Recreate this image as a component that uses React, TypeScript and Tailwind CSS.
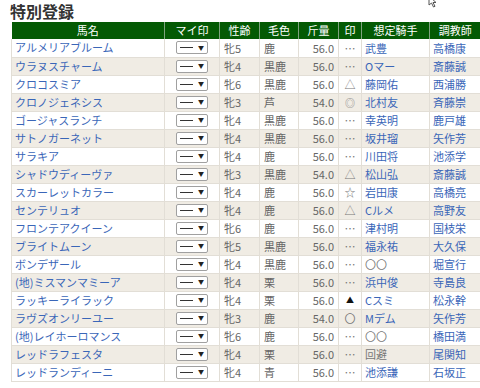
import React from "react";

interface Entry {
  name: string;
  sex: string;
  coat: string;
  weight: string;
  mark: string;
  jockey: string;
  trainer: string;
}

const entries: Entry[] = [
  { name: "アルメリアブルーム", sex: "牝5", coat: "鹿", weight: "56.0", mark: "…", jockey: "武豊", trainer: "高橋康" },
  { name: "ウラヌスチャーム", sex: "牝4", coat: "黒鹿", weight: "56.0", mark: "…", jockey: "Oマー", trainer: "斎藤誠" },
  { name: "クロコスミア", sex: "牝6", coat: "黒鹿", weight: "56.0", mark: "△", jockey: "藤岡佑", trainer: "西浦勝" },
  { name: "クロノジェネシス", sex: "牝3", coat: "芦", weight: "54.0", mark: "◎", jockey: "北村友", trainer: "斉藤崇" },
  { name: "ゴージャスランチ", sex: "牝4", coat: "黒鹿", weight: "56.0", mark: "…", jockey: "幸英明", trainer: "鹿戸雄" },
  { name: "サトノガーネット", sex: "牝4", coat: "黒鹿", weight: "56.0", mark: "…", jockey: "坂井瑠", trainer: "矢作芳" },
  { name: "サラキア", sex: "牝4", coat: "鹿", weight: "56.0", mark: "…", jockey: "川田将", trainer: "池添学" },
  { name: "シャドウディーヴァ", sex: "牝3", coat: "黒鹿", weight: "54.0", mark: "△", jockey: "松山弘", trainer: "斎藤誠" },
  { name: "スカーレットカラー", sex: "牝4", coat: "鹿", weight: "56.0", mark: "☆", jockey: "岩田康", trainer: "高橋亮" },
  { name: "センテリュオ", sex: "牝4", coat: "鹿", weight: "56.0", mark: "△", jockey: "Cルメ", trainer: "高野友" },
  { name: "フロンテアクイーン", sex: "牝6", coat: "鹿", weight: "56.0", mark: "…", jockey: "津村明", trainer: "国枝栄" },
  { name: "ブライトムーン", sex: "牝5", coat: "黒鹿", weight: "56.0", mark: "…", jockey: "福永祐", trainer: "大久保" },
  { name: "ボンデザール", sex: "牝4", coat: "黒鹿", weight: "56.0", mark: "…", jockey: "〇〇", trainer: "堀宣行" },
  { name: "(地)ミスマンマミーア", sex: "牝4", coat: "栗", weight: "56.0", mark: "…", jockey: "浜中俊", trainer: "寺島良" },
  { name: "ラッキーライラック", sex: "牝4", coat: "栗", weight: "56.0", mark: "▲", jockey: "Cスミ", trainer: "松永幹" },
  { name: "ラヴズオンリーユー", sex: "牝3", coat: "鹿", weight: "54.0", mark: "〇", jockey: "Mデム", trainer: "矢作芳" },
  { name: "(地)レイホーロマンス", sex: "牝6", coat: "鹿", weight: "56.0", mark: "…", jockey: "〇〇", trainer: "橋田満" },
  { name: "レッドラフェスタ", sex: "牝4", coat: "栗", weight: "56.0", mark: "…", jockey: "回避", trainer: "尾関知" },
  { name: "レッドランディーニ", sex: "牝4", coat: "青", weight: "56.0", mark: "…", jockey: "池添謙", trainer: "石坂正" },
];

const headers = ["馬名", "マイ印", "性齢", "毛色", "斤量", "印", "想定騎手", "調教師"];

function MarkSelect() {
  return (
    <div className="mx-auto flex h-[13px] w-[32px] items-center justify-between rounded-[2px] border border-[#a0a0a0] bg-white px-[3px]">
      <span className="block h-px w-[13px] bg-[#333]" />
      <span className="text-[6px] leading-none text-[#222]">▼</span>
    </div>
  );
}

export default function App() {
  return (
    <div
      className="relative h-[388px] w-[480px] overflow-hidden bg-white"
      style={{ fontFamily: '"Noto Sans CJK JP", "Noto Sans", sans-serif' }}
    >
      <svg className="absolute left-[428px] top-[-4px]" width="12" height="12" viewBox="0 0 12 12">
        <path d="M1 0 L1 9 L3.5 7 L5.5 11 L7 10.3 L5 6.5 L8 6.5 Z" fill="#fff" stroke="#555" strokeWidth="1" />
      </svg>

      <h1 className="pl-[10px] text-[16px] font-bold leading-[22px] text-[#333]">特別登録</h1>

      <table className="ml-[11px] w-[469px] table-fixed border-collapse text-[11px]">
        <colgroup>
          <col className="w-[153px]" />
          <col className="w-[55px]" />
          <col className="w-[40px]" />
          <col className="w-[39px]" />
          <col className="w-[40px]" />
          <col className="w-[23px]" />
          <col className="w-[68px]" />
          <col className="w-[51px]" />
        </colgroup>
        <thead>
          <tr className="h-[17px] bg-[#045a04]">
            {headers.map((h, i) => (
              <th
                key={h}
                className={`p-0 text-center text-[11px] font-normal leading-[17px] text-white ${
                  i > 0 ? "border-l border-[#7fa37f]" : ""
                }`}
              >
                {h}
              </th>
            ))}
          </tr>
        </thead>
        <tbody>
          {entries.map((e, i) => {
            const gray = e.jockey === "〇〇" || e.jockey === "回避";
            return (
              <tr
                key={e.name}
                className={`h-[18px] border-b border-[#e2ded6] ${i % 2 === 1 ? "bg-[#f0ece4]" : "bg-white"}`}
              >
                <td className="truncate border-l border-[#e2ded6] p-0 pl-[3px] leading-[17px] text-[#3a66b8]">
                  {e.name}
                </td>
                <td className="border-l border-[#e2ded6] p-0">
                  <MarkSelect />
                </td>
                <td className="border-l border-[#e2ded6] p-0 pl-[4px] text-[#666]">{e.sex}</td>
                <td className="border-l border-[#e2ded6] p-0 pl-[4px] text-[#666]">{e.coat}</td>
                <td className="border-l border-[#e2ded6] p-0 pr-[4px] text-right text-[#666]">{e.weight}</td>
                <td
                  className={`border-l border-[#e2ded6] p-0 text-center ${
                    e.mark === "▲" ? "text-[8px] text-[#111]" : e.mark === "◎" ? "text-[10px] text-[#888]" : "text-[#777]"
                  }`}
                >
                  {e.mark}
                </td>
                <td className={`border-l border-[#e2ded6] p-0 pl-[3px] ${gray ? "text-[#777]" : "text-[#3a66b8]"}`}>
                  {e.jockey}
                </td>
                <td className="border-l border-[#e2ded6] p-0 pl-[3px] text-[#3a66b8]">{e.trainer}</td>
              </tr>
            );
          })}
        </tbody>
      </table>
    </div>
  );
}
